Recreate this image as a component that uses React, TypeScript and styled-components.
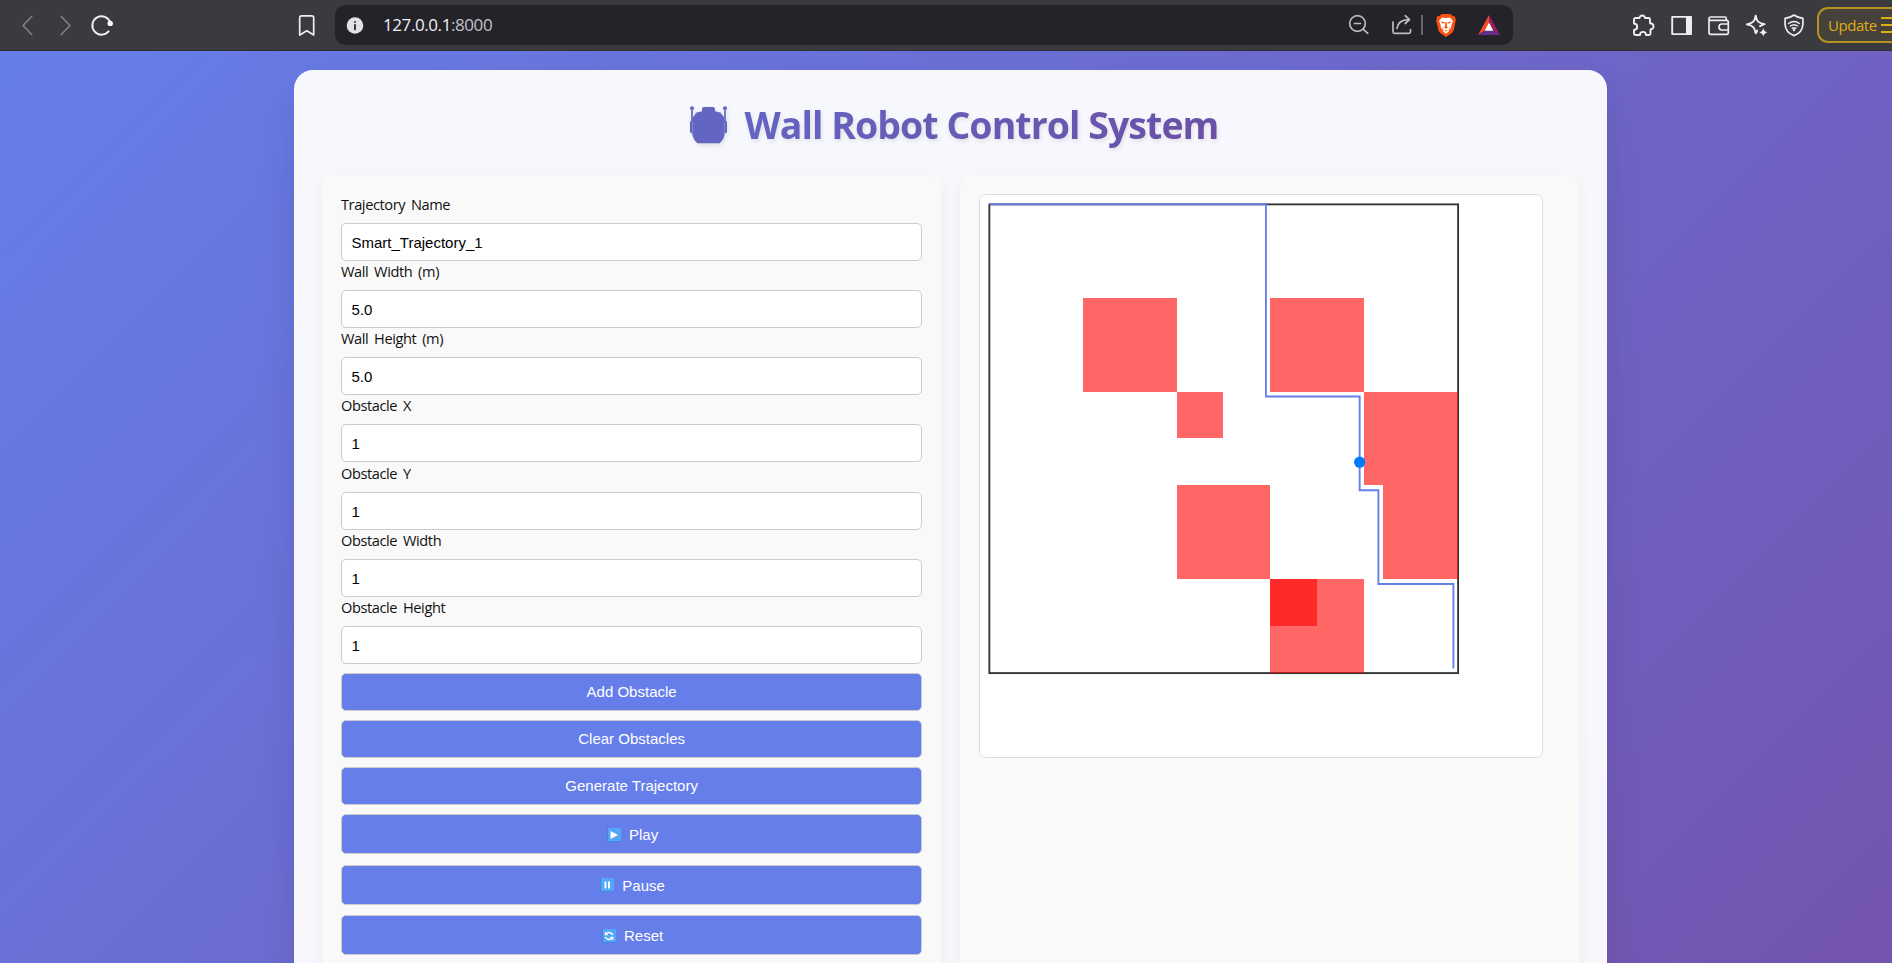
import React from 'react';
import styled, { createGlobalStyle } from 'styled-components';

const ui = `'Open Sans', 'Noto Sans', sans-serif`;
const arial = `'Liberation Sans', Arial, sans-serif`;

const GlobalStyle = createGlobalStyle`
  * { box-sizing: border-box; }
  html, body { margin: 0; padding: 0; }
  body { overflow: hidden; height: 963px; font-family: ${ui}; }
`;

const Window = styled.div`
  width: 100%;
  height: 963px;
  overflow: hidden;
  display: flex;
  flex-direction: column;
`;

const Toolbar = styled.header`
  flex: none;
  height: 51px;
  display: flex;
  align-items: center;
  overflow: hidden;
  background: #3b3a3f;
  border-bottom: 1px solid #2f2e33;
`;

const Glyph = styled.svg<{ $w?: number; $ml?: number; $dim?: boolean }>`
  width: ${(p) => p.$w ?? 24}px;
  height: 24px;
  margin-left: ${(p) => p.$ml ?? 0}px;
  flex: none;
  fill: none;
  stroke: ${(p) => (p.$dim ? '#807f84' : '#eeedf2')};
  stroke-width: 1.7;
  stroke-linecap: round;
  stroke-linejoin: round;
`;

const AddressBar = styled.div`
  width: 1178px;
  height: 40px;
  flex: none;
  display: flex;
  align-items: center;
  margin-left: 18px;
  padding-left: 11px;
  border-radius: 10px;
  background: #242329;
`;

const Url = styled.div`
  width: 983px;
  flex: none;
  padding-left: 19px;
  font-size: 17px;
  line-height: 22px;
  letter-spacing: -0.42px;
  color: #f0eff4;
  white-space: nowrap;
`;

const Port = styled.span`
  color: #c3c2c8;
`;

const Divider = styled.i`
  flex: none;
  width: 2px;
  height: 20px;
  margin-left: 7px;
  margin-right: 1px;
  background: #67666c;
`;

const UpdateButton = styled.div`
  flex: none;
  width: 100px;
  height: 36px;
  margin-left: 11px;
  padding-left: 9px;
  display: flex;
  align-items: center;
  border: 2px solid #b5921c;
  border-radius: 11px;
  background: #46423b;
  color: #dcae16;
  font-size: 15px;
  letter-spacing: -0.45px;
`;

const MenuLines = styled.span`
  width: 20px;
  height: 16px;
  margin-left: 4px;
  border-top: 2px solid #dcae16;
  border-bottom: 2px solid #dcae16;
  display: flex;
  align-items: center;
  &::before {
    content: '';
    width: 100%;
    height: 2px;
    background: #dcae16;
  }
`;

const Page = styled.main`
  flex: 1;
  width: 1900.9px;
  min-height: 0;
  overflow: hidden;
  padding-top: 19px;
  display: flex;
  justify-content: center;
  align-items: flex-start;
  background: linear-gradient(135deg, #667eea 0%, #764ba2 100%) 0 0 / 100% 1500px no-repeat;
`;

const Container = styled.section`
  width: 1312.5px;
  height: 1100px;
  padding: 28px;
  border-radius: 19px;
  background: rgba(255, 255, 255, 0.95);
  box-shadow: 0 19px 38px rgba(0, 0, 0, 0.1);
`;

const Title = styled.h1`
  height: 77px;
  margin: 0;
  padding: 0 0 24px 8px;
  display: flex;
  align-items: center;
  justify-content: center;
  gap: 17px;
  filter: drop-shadow(1px 2px 2px rgba(0, 0, 0, 0.1));
`;

const TitleText = styled.span`
  font-size: 37.5px;
  line-height: 52px;
  letter-spacing: -0.95px;
  font-weight: 700;
  white-space: nowrap;
  color: transparent;
  background: linear-gradient(90deg, #6464c2, #6a50a6);
  background-clip: text;
`;

const Robot = styled.svg`
  width: 37px;
  height: 38px;
  flex: none;
`;

const Columns = styled.div`
  display: grid;
  grid-template-columns: 1fr 1fr;
  gap: 18.75px;
`;

const Panel = styled.div`
  height: 1000px;
  padding: 18.75px;
  border-radius: 11px;
  background: #f9f9f9;
  box-shadow: 0 4px 14px rgba(0, 0, 0, 0.05);
`;

const Field = styled.label`
  display: block;
  height: 67.2px;
`;

const FieldName = styled.span`
  display: block;
  height: 29px;
  line-height: 20px;
  font-size: 14.6px;
  letter-spacing: -0.4px;
  word-spacing: 2.4px;
  color: #111;
`;

const Input = styled.input`
  display: block;
  width: 100%;
  height: 38px;
  padding: 1px 9.5px 0;
  border: 1px solid #ccc;
  border-radius: 5px;
  background: #fff;
  color: #000;
  font: 15px ${arial};
`;

const Buttons = styled.div`
  display: flex;
  flex-direction: column;
  gap: 9.4px;
  padding-top: 9.4px;
`;

const Button = styled.button<{ $tall?: boolean }>`
  width: 100%;
  height: ${(p) => (p.$tall ? 40.2 : 37.5)}px;
  margin-bottom: ${(p) => (p.$tall ? 0.9 : 0)}px;
  padding: ${(p) => (p.$tall ? '1px 0 0 2px' : '0 0 1px')};
  display: flex;
  align-items: center;
  justify-content: center;
  gap: 8px;
  border: 1px solid #ccc;
  border-radius: 5px;
  background: #667eea;
  color: #fff;
  font: 15px ${arial};
`;

const KeyIcon = styled.svg`
  width: 14px;
  height: 14px;
  flex: none;
`;

const Wall = styled.svg`
  display: block;
  width: 564px;
  height: 564px;
  border: 1px solid #ddd;
  border-radius: 7px;
  background: #fff;
`;

type KeyKind = 'play' | 'pause' | 'reset';

function Key({ kind }: { kind: KeyKind }) {
  return (
    <KeyIcon viewBox="0 0 14 14">
      <rect width="14" height="14" fill="#3f86dd" />
      <rect x="1" width="13" height="13" fill="#53a6f8" />
      {kind === 'play' && <path d="M3.5 3 L11 7 L3.5 11 Z" fill="#fff" />}
      {kind === 'pause' && <path d="M4.5 3.5 H6.4 V10.5 H4.5 Z M8 3.5 H9.9 V10.5 H8 Z" fill="#fff" />}
      {kind === 'reset' && (
        <g fill="none" stroke="#fff" strokeWidth="1.5">
          <path d="M10.8 6 A4 3.4 0 0 0 4.2 4.6" />
          <path d="M3.4 8 A4 3.4 0 0 0 10 9.4" />
          <path d="M2.8 2.5 V6.2 H6.4 Z M11.4 11.5 V7.8 H7.8 Z" fill="#fff" stroke="none" />
        </g>
      )}
    </KeyIcon>
  );
}

const fields: [string, string][] = [
  ['Trajectory Name', 'Smart_Trajectory_1'],
  ['Wall Width (m)', '5.0'],
  ['Wall Height (m)', '5.0'],
  ['Obstacle X', '1'],
  ['Obstacle Y', '1'],
  ['Obstacle Width', '1'],
  ['Obstacle Height', '1'],
];

const obstacles = [
  [1, 1, 1, 1], [3, 1, 1, 1], [2, 2, 0.5, 0.5], [4, 2, 1, 1],
  [2, 3, 1, 1], [4.2, 3, 0.8, 1], [3, 4, 1, 1], [3, 4, 0.5, 0.5],
];

const path = [
  [0, 0], [2.95, 0], [2.95, 2.05], [3.95, 2.05], [3.95, 3.05],
  [4.15, 3.05], [4.15, 4.05], [4.95, 4.05], [4.95, 4.95],
];

function BrowserBar() {
  return (
    <Toolbar>
      <Glyph $w={16} $ml={20} $dim viewBox="0 0 16 24"><path d="M11.7 3.5 L3 12.5 L11.7 21.5" /></Glyph>
      <Glyph $w={16} $ml={22} $dim viewBox="0 0 16 24"><path d="M3.3 3.5 L12 12.5 L3.3 21.5" /></Glyph>
      <Glyph $ml={16} viewBox="0 0 24 24">
        <path d="M20.3 9.5 A9.2 9.2 0 1 0 18.6 18.4" strokeWidth="2" />
        <circle cx="20.2" cy="10.4" r="2.7" fill="#fff" stroke="none" />
      </Glyph>
      <Glyph $w={20} $ml={183} viewBox="0 0 20 24">
        <path d="M4.7 2.8 H14.7 Q16.7 2.8 16.7 4.8 V22 L9.8 17.8 L2.7 22 V4.8 Q2.7 2.8 4.7 2.8 Z" />
      </Glyph>
      <AddressBar>
        <Glyph $w={18} viewBox="0 0 18 24">
          <circle cx="9" cy="12.5" r="8.3" fill="#e2e1e8" stroke="none" />
          <path d="M9 12 V16.2 M9 8.9 V9" stroke="#33323a" strokeWidth="2" />
        </Glyph>
        <Url>127.0.0.1<Port>:8000</Port></Url>
        <Glyph viewBox="0 0 24 24">
          <g stroke="#bdbcc2"><circle cx="10.5" cy="10.5" r="7.8" /><path d="M7.6 10.5 H13.4 M16.3 16.3 L20.8 20.3" /></g>
        </Glyph>
        <Glyph $ml={19} viewBox="0 0 24 24">
          <path stroke="#bdbcc2" d="M3 9 V18.8 Q3 20.3 4.5 20.3 H19 Q20.5 20.3 20.5 18.8 V16.5 M7 15.5 C7.5 10 11 6.8 19 6.6 M15.2 2.7 L19.5 6.6 L15.2 10.5" />
        </Glyph>
        <Divider />
        <Glyph $ml={10} viewBox="0 0 24 24">
          <g stroke="none">
            <path fill="#fb5210" d="M7.5 1 H16.5 L18.5 3 L21 3.5 L21.8 7.5 L19.5 17.5 Q18.8 19.5 16.8 20.8 L12 24 L7.2 20.8 Q5.2 19.5 4.5 17.5 L2.2 7.5 L3 3.5 L5.5 3 Z" />
            <path fill="#fff" d="M8 4.5 L12 5 L16 4.5 L19 8 L17.5 11.5 L17 15 L14.5 17 L15 18.3 L12 20.8 L9 18.3 L9.5 17 L7 15 L6.5 11.5 L5 8 Z" />
            <path fill="#fb5210" d="M7 8.6 L10.6 9.2 L10.4 10.6 L8 10.2 Z M17 8.6 L13.4 9.2 L13.6 10.6 L16 10.2 Z M11.4 9 H12.6 L13 13.5 L14 14.5 L12 15.8 L10 14.5 L11 13.5 Z M8 13 L9.6 15.5 L8.4 15 Z M16 13 L14.4 15.5 L15.6 15 Z M10.5 17.8 L12 17 L13.5 17.8 L12 18.6 Z" />
          </g>
        </Glyph>
        <Glyph $ml={19} viewBox="0 0 24 24">
          <g stroke="none">
            <path fill="#fb4a22" d="M12 2 L1 22 L8 17.5 L12 10 Z" />
            <path fill="#9b1f60" d="M12 2 L23 22 L16 17.5 L12 10 Z" />
            <path fill="#662d91" d="M1 22 H23 L16 17.5 H8 Z" />
            <path fill="#fff" d="M12 9.5 L16.3 17.8 H7.7 Z" />
          </g>
        </Glyph>
      </AddressBar>
      <Glyph $ml={119} viewBox="0 0 24 24">
        <path strokeWidth="1.9" d="M2 6.5 Q2 5 3.5 5 H7.5 C7.3 1.7 13.2 1.7 13 5 H16.5 Q18 5 18 6.5 V10.2 C22.6 10.2 22.6 16.4 18.5 16.4 V20.5 Q18.5 22 17 22 H14 C14 17.8 8 17.8 8 22 H3.5 Q2 22 2 20.5 V17 C6.3 16.5 6.3 11 2 10.5 Z" />
      </Glyph>
      <Glyph $ml={14} viewBox="0 0 24 24">
        <path strokeWidth="1.9" d="M2.2 3.9 H21 V21.1 H2.2 Z" />
        <path d="M16 3.5 H21.5 V21.5 H16 Z" fill="#eeedf2" stroke="none" />
      </Glyph>
      <Glyph $ml={13} viewBox="0 0 24 24">
        <path d="M2 6 V19.5 Q2 21.3 3.8 21.3 H19.5 Q21.3 21.3 21.3 19.5 V9 Q21.3 7.3 19.5 7.3 H3.3 Q2 7.3 2 5.7 Q2 4 3.8 4 H17.8 Q19.3 4 19.3 5.5 V7 M21.3 11 H14.8 Q12 11 12 14 Q12 17 14.8 17 H21.3" />
      </Glyph>
      <Glyph $ml={14} viewBox="0 0 24 24">
        <path strokeWidth="1.9" d="M10.7 2.7 C11.8 8.5 13 9.8 19.6 11.2 C18 11.7 16.2 12.4 15 13.3 M12.2 17.5 Q11.5 19.8 10.7 20.3 C9.6 14.5 8.3 12.6 1.8 11.4 C8.4 9.8 9.6 8.5 10.7 2.7" />
        <path fill="#eeedf2" stroke="none" d="M18.3 15 Q19 18.6 22.3 19.4 Q19 20.2 18.3 23.5 Q17.6 20.2 14.3 19.4 Q17.6 18.6 18.3 15 Z" />
      </Glyph>
      <Glyph $ml={13} viewBox="0 0 24 24">
        <path d="M12 2 Q16 5 20.9 5.3 V11.5 Q20.5 19.5 12 22.6 Q3.5 19.5 3.1 11.5 V5.3 Q8 5 12 2 Z" />
        <path strokeWidth="1.5" d="M6.6 10.5 Q12 6.5 17.4 10.5 M8.4 13 Q12 10.3 15.6 13 M10.2 15.4 Q12 14 13.8 15.4" />
        <circle cx="12" cy="17" r="1.2" fill="#eeedf2" stroke="none" />
      </Glyph>
      <UpdateButton>Update<MenuLines /></UpdateButton>
    </Toolbar>
  );
}

export default function App() {
  return (
    <>
      <GlobalStyle />
      <Window>
        <BrowserBar />
        <Page>
          <Container>
            <Title>
              <Robot viewBox="0 0 37 38">
                <g fill="#6265c2">
                  <circle cx="2" cy="2.2" r="2" />
                  <circle cx="35" cy="2.2" r="2" />
                  <path d="M1 3 H3 V16 H1 Z M34 3 H36 V16 H34 Z" fill="#7779cb" />
                  <rect x="12" y="1" width="13" height="6" rx="2" />
                  <path d="M0 16.5 Q0 14.5 2.2 14.5 V27.5 Q0 27.5 0 25.5 Z M37 16.5 Q37 14.5 34.8 14.5 V27.5 Q37 27.5 37 25.5 Z" />
                  <path d="M12 5.2 H25 Q34.5 6.5 34.7 15 V27 Q34.5 33 29.5 37.3 H7.5 Q2.5 33 2.3 27 V15 Q2.5 6.5 12 5.2 Z" />
                </g>
              </Robot>
              <TitleText>Wall Robot Control System</TitleText>
            </Title>
            <Columns>
              <Panel>
                {fields.map(([name, value]) => (
                  <Field key={name}>
                    <FieldName>{name}</FieldName>
                    <Input defaultValue={value} />
                  </Field>
                ))}
                <Buttons>
                  <Button>Add Obstacle</Button>
                  <Button>Clear Obstacles</Button>
                  <Button>Generate Trajectory</Button>
                  <Button $tall><Key kind="play" />Play</Button>
                  <Button $tall><Key kind="pause" />Pause</Button>
                  <Button $tall><Key kind="reset" />Reset</Button>
                </Buttons>
              </Panel>
              <Panel>
                <Wall viewBox="0 0 599.5 599.5">
                  <rect x="10" y="10" width="500" height="500" stroke="#333" strokeWidth="2" fill="none" />
                  {obstacles.map(([x, y, w, h], i) => (
                    <rect
                      key={i}
                      x={9.7 + x * 100}
                      y={9.7 + y * 100}
                      width={w * 100}
                      height={h * 100}
                      fill="rgba(255,0,0,0.6)"
                      shapeRendering="crispEdges"
                    />
                  ))}
                  <polyline
                    points={path.map(([x, y]) => `${10 + x * 100},${10 + y * 100}`).join(' ')}
                    fill="none"
                    stroke="#667eea"
                    strokeWidth="2"
                  />
                  <circle cx="405" cy="285" r="6" fill="#007bff" />
                </Wall>
              </Panel>
            </Columns>
          </Container>
        </Page>
      </Window>
    </>
  );
}
